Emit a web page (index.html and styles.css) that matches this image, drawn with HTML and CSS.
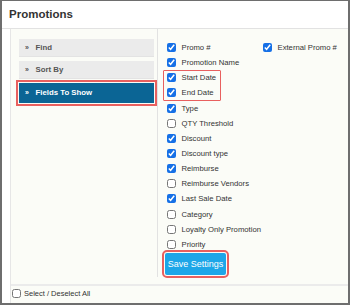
FILE: index.html
```html
<!DOCTYPE html>
<html lang="en">
<head>
  <meta charset="UTF-8">
  <meta name="viewport" content="width=device-width, initial-scale=1.0">
  <title>Promotions</title>
  <link rel="stylesheet" href="styles.css">
</head>
<body>
  <div class="marco">
    <header class="cabecera">
      <h1>Promotions</h1>
    </header>

    <div class="panel">
      <div class="contenido">
        <div class="menu">
          <div class="opcion"><span class="flecha">»</span>Find</div>
          <div class="opcion"><span class="flecha">»</span>Sort By</div>
          <div class="opcion activa"><span class="flecha">»</span>Fields To Show</div>
        </div>

        <div class="campos">
          <div class="columnas">
            <div class="columna">
              <label class="fila"><input type="checkbox" checked>Promo #</label>
              <label class="fila"><input type="checkbox" checked>Promotion Name</label>
              <div class="resaltado">
                <label class="fila"><input type="checkbox" checked>Start Date</label>
                <label class="fila"><input type="checkbox" checked>End Date</label>
              </div>
              <label class="fila"><input type="checkbox" checked>Type</label>
              <label class="fila"><input type="checkbox">QTY Threshold</label>
              <label class="fila"><input type="checkbox" checked>Discount</label>
              <label class="fila"><input type="checkbox" checked>Discount type</label>
              <label class="fila"><input type="checkbox" checked>Reimburse</label>
              <label class="fila"><input type="checkbox">Reimburse Vendors</label>
              <label class="fila"><input type="checkbox" checked>Last Sale Date</label>
              <label class="fila"><input type="checkbox">Category</label>
              <label class="fila"><input type="checkbox">Loyalty Only Promotion</label>
              <label class="fila"><input type="checkbox">Priority</label>
            </div>
            <div class="columna extra">
              <label class="fila"><input type="checkbox" checked>External Promo #</label>
            </div>
          </div>
          <button class="guardar">Save Settings</button>
        </div>
      </div>

      <div class="pie">
        <label class="fila"><input type="checkbox">Select / Deselect All</label>
      </div>
    </div>
  </div>
</body>
</html>
```

FILE: styles.css
```css
body {
  margin: 0;
  padding: 0;
  font-family: 'Liberation Sans', Arial, sans-serif;
  color: #333;
}

.marco {
  box-sizing: border-box;
  width: 350px;
  height: 305px;
  border: 2px solid #6e6e6e;
  border-top-width: 1px;
  display: flex;
  flex-direction: column;
  background: #fff;
}

.cabecera {
  height: 27px;
  border-bottom: 1px solid #e2e2e2;
  padding-left: 7px;
}

.cabecera h1 {
  margin: 0;
  font-size: 11.5px;
  line-height: 27px;
  font-weight: bold;
  color: #333;
}

.panel {
  flex: 1;
  margin-left: 8px;
  border-left: 1px solid #e6e6e6;
  background: #fbfcf7;
  display: flex;
  flex-direction: column;
}

.contenido {
  display: flex;
  height: 248px;
}

.menu {
  flex-shrink: 0;
  width: 135px;
  padding: 10px 3px 0 8px;
  border-right: 1px solid #e2e2e2;
  display: flex;
  flex-direction: column;
  gap: 5px;
}

.opcion {
  height: 17px;
  line-height: 17px;
  padding-left: 6px;
  background: #ebebeb;
  border-bottom: 1px solid #e3e3e3;
  font-size: 7.8px;
  font-weight: bold;
  color: #555;
}

.opcion:nth-child(2) {
  margin-top: -1px;
}

.flecha {
  display: inline-block;
  width: 10.5px;
  font-size: 7px;
}

.activa {
  height: 20px;
  line-height: 20px;
  margin-top: -1px;
  background: #0b6595;
  border-bottom: none;
  color: #fff;
  outline: 2px solid #e8605f;
  outline-offset: 1px;
}

.campos {
  padding: 11px 0 0 9px;
  flex: 1;
  min-width: 0;
}

.columnas {
  display: flex;
}

.columna {
  width: 96px;
  flex-shrink: 0;
  display: flex;
  flex-direction: column;
}

.columna.extra {
  flex: 1;
  width: auto;
}

.fila {
  display: flex;
  align-items: center;
  gap: 5.5px;
  height: 15.15px;
  font-size: 7.7px;
  color: #333;
  white-space: nowrap;
}

.fila input {
  width: 9px;
  height: 9px;
  margin: 0;
  accent-color: #1670e6;
}

.resaltado {
  position: relative;
}

.resaltado::after {
  content: "";
  position: absolute;
  left: -4.5px;
  top: 0;
  width: 56px;
  bottom: -0.5px;
  border: 1.5px solid #e8605f;
  border-radius: 1px;
}

.guardar {
  display: block;
  width: 61px;
  height: 22px;
  margin: 1px 0 0 -2px;
  padding: 0;
  border: none;
  border-radius: 2px;
  background: #1da6e8;
  color: #fff;
  font-family: 'Liberation Sans', Arial, sans-serif;
  font-size: 9px;
  outline: 2px solid #e8605f;
  outline-offset: 1px;
}

.pie {
  margin-top: 7px;
  border-top: 2px solid #ebebeb;
  padding: 2px 0 0 1px;
}

.pie .fila {
  gap: 3px;
  height: 10px;
  font-size: 7.5px;
}
```
